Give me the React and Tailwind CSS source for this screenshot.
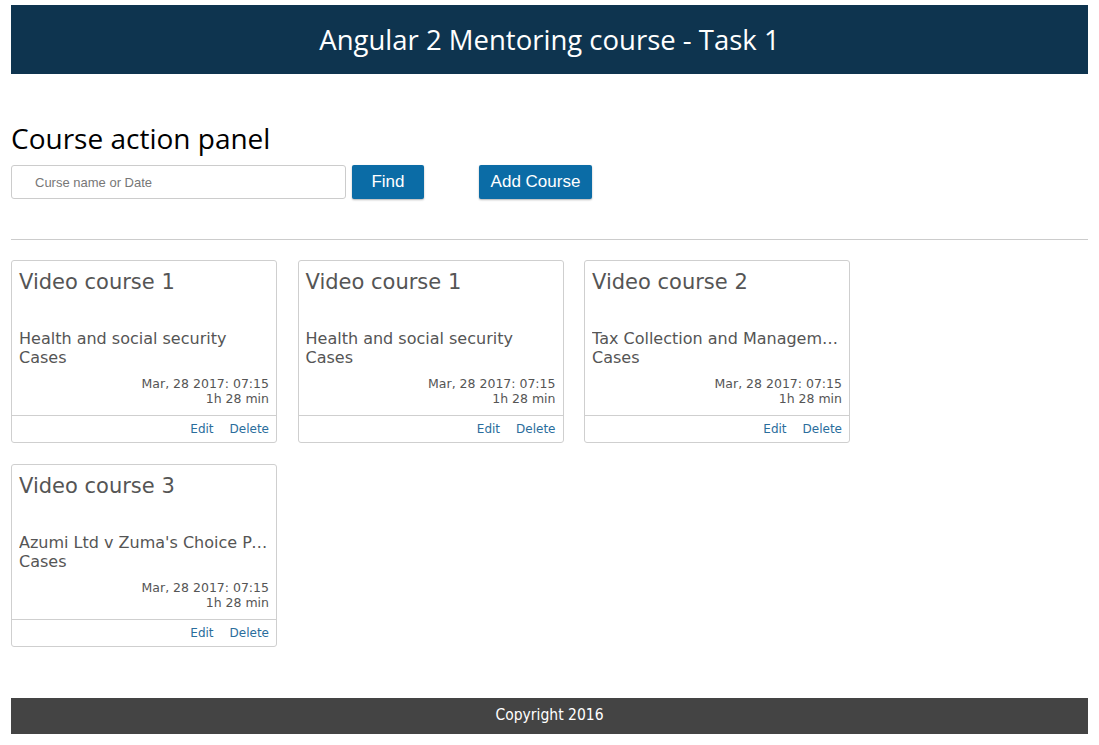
import React from "react";

const courses = [
  { id: 1, title: "Video course 1", desc: "Health and social security", type: "Cases" },
  { id: 2, title: "Video course 1", desc: "Health and social security", type: "Cases" },
  { id: 3, title: "Video course 2", desc: "Tax Collection and Management Cases", type: "Cases" },
  { id: 4, title: "Video course 3", desc: "Azumi Ltd v Zuma's Choice Pet Products", type: "Cases" },
];

function CourseCard({ course }) {
  return (
    <div className="w-[266px] h-[183px] border border-[#cfcfcf] rounded-[3px] flex flex-col text-[#555]">
      <div className="px-[7px] pt-[7px] flex-1">
        <h3 className="text-[21px] leading-[28px]">{course.title}</h3>
        <p className="mt-[33px] text-[16px] leading-[19px] truncate">{course.desc}</p>
        <p className="text-[16px] leading-[19px]">{course.type}</p>
        <div className="text-right text-[12.5px] leading-[15px] mt-[9px]">
          <div>Mar, 28 2017: 07:15</div>
          <div>1h 28 min</div>
        </div>
      </div>
      <div className="border-t border-[#cfcfcf] h-[27px] flex justify-end items-center gap-[16px] px-[7px] text-[12px] text-[#2a6d9c]">
        <a href="#">Edit</a>
        <a href="#">Delete</a>
      </div>
    </div>
  );
}

export default function App() {
  return (
    <div className="min-h-screen bg-white px-[11px] pt-[5px] pb-[11px] font-['DejaVu_Sans',sans-serif]">
      {/* HEADER */}
      <header className="h-[69px] bg-[#0e344f] flex items-center justify-center">
        <h1 className="text-white text-[27.5px] font-['Open_Sans',sans-serif]">Angular 2 Mentoring course - Task 1</h1>
      </header>

      {/* ACTION PANEL */}
      <section className="pt-[46px]">
        <h2 className="text-[28px] leading-[36px] text-black font-['Open_Sans',sans-serif]">Course action panel</h2>
        <div className="flex items-center mt-[9px] font-['Liberation_Sans',sans-serif]">
          <input
            placeholder="Curse name or Date"
            className="w-[335px] h-[34px] border border-[#ccc] rounded-[3px] pl-[23px] text-[13px] placeholder:text-[#777] outline-none"
          />
          <button className="ml-[6px] w-[72px] h-[34px] bg-[#0b6ca6] text-white text-[17px] rounded-[2px] shadow-[0_1px_2px_rgba(0,0,0,0.3)]">
            Find
          </button>
          <button className="ml-[55px] w-[113px] h-[34px] bg-[#0b6ca6] text-white text-[17px] rounded-[2px] shadow-[0_1px_2px_rgba(0,0,0,0.3)]">
            Add Course
          </button>
        </div>
      </section>

      <hr className="mt-[40px] border-[#ccc]" />

      {/* COURSES */}
      <div className="mt-[20px] flex flex-wrap gap-x-[20.5px] gap-y-[21px] w-[880px]">
        {courses.map((c) => (
          <CourseCard key={c.id} course={c} />
        ))}
      </div>

      {/* FOOTER */}
      <footer className="mt-[51px] h-[36px] bg-[#444] flex items-center justify-center text-white text-[15.5px] font-['DejaVu_Sans_Condensed',sans-serif]">
        Copyright 2016
      </footer>
    </div>
  );
}
